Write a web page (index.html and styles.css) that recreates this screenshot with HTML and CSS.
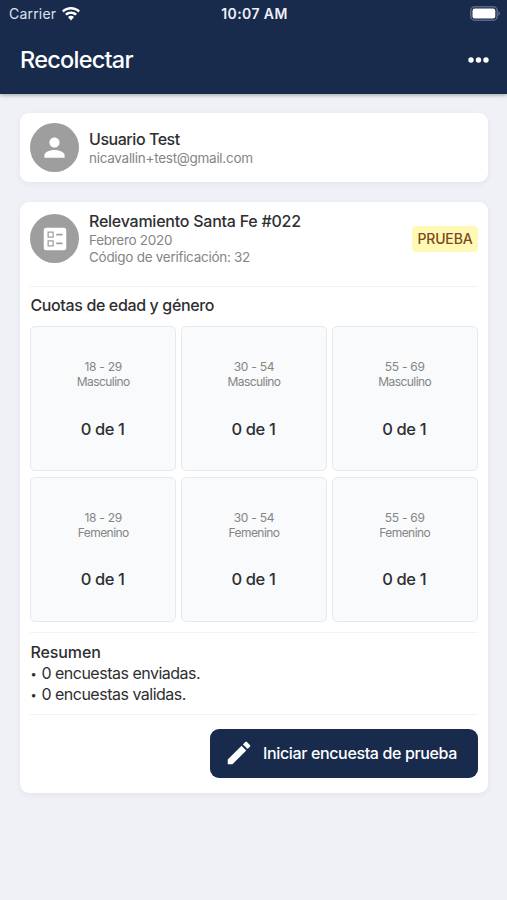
FILE: index.html
```
<!DOCTYPE html>
<html lang="es">
<head>
  <meta charset="UTF-8" />
  <meta name="viewport" content="width=device-width, initial-scale=1.0"/>
  <title>Recolectar</title>
  <link rel="stylesheet" href="styles.css">
</head>
<body>

  <!-- Encabezado -->
  <header>
    <div class="status-bar">
      <div class="carrier">
        <span>Carrier</span>
        <svg width="18" height="14" viewBox="0 0 18 14" fill="#fff">
          <path d="M9 0C5.600 0 2.500 1.300 0 3.500l1.700 1.900C3.700 3.600 6.200 2.600 9 2.600s5.300 1 7.300 2.800L18 3.500C15.500 1.300 12.400 0 9 0z"/>
          <path d="M9 4.400c-2.300 0-4.400.9-6 2.300l1.700 1.900C5.900 7.500 7.400 6.900 9 6.900s3.100.6 4.300 1.700L15 6.700c-1.600-1.400-3.700-2.300-6-2.300z"/>
          <path d="M9 8.700c-1.200 0-2.200.4-3 1.200l3 3.500 3-3.500c-.8-.8-1.800-1.200-3-1.200z"/>
        </svg>
      </div>
      <div class="clock">10:07 AM</div>
      <div class="battery">
        <svg width="30" height="15" viewBox="0 0 30 15">
          <rect x=".8" y=".8" width="26.400" height="13.400" rx="4" fill="none" stroke="#5a6685" stroke-width="1.600"/>
          <rect x="2.500" y="2.500" width="22.800" height="10" rx="2.200" fill="#fff"/>
          <path d="M28.500 5.200c1.900 1 1.900 3.600 0 4.600z" fill="#66718f"/>
        </svg>
      </div>
    </div>
    <div class="toolbar">
      <h1>Recolectar</h1>
      <svg width="21" height="6" viewBox="0 0 21 6" fill="#fff">
        <circle cx="3" cy="3" r="2.700"/>
        <circle cx="10.500" cy="3" r="2.700"/>
        <circle cx="18" cy="3" r="2.700"/>
      </svg>
    </div>
  </header>

  <main>
    <!-- Usuario -->
    <section class="card user">
      <div class="avatar">
        <svg width="27" height="27" viewBox="0 0 24 24" fill="#fff">
          <path d="M12 12c2.500 0 4.500-2 4.500-4.500S14.500 3 12 3 7.500 5 7.500 7.500 9.500 12 12 12zm0 2.200c-3 0-9 1.500-9 4.600V21h18v-2.200c0-3.100-6-4.600-9-4.600z"/>
        </svg>
      </div>
      <div class="info">
        <h2 class="name">Usuario Test</h2>
        <p class="email">nicavallin+test@gmail.com</p>
      </div>
    </section>

    <!-- Encuesta -->
    <section class="card survey">
      <div class="survey-head">
        <div class="avatar">
          <svg width="30" height="30" viewBox="0 0 24 24" fill="#fff">
            <path fill-rule="evenodd" d="M5 3h14a2 2 0 0 1 2 2v14a2 2 0 0 1-2 2H5a2 2 0 0 1-2-2V5a2 2 0 0 1 2-2zM6 6v5h5V6H6zm0 7v5h5v-5H6zm1-6h3v3H7V7zm0 7h3v3H7v-3zm6-6.300v1.500h5V7.700h-5zm0 7v1.500h5v-1.500h-5z"/>
          </svg>
        </div>
        <div class="info">
          <h2 class="title">Relevamiento Santa Fe #022</h2>
          <p class="date">Febrero 2020</p>
          <p class="code">Código de verificación: 32</p>
        </div>
        <span class="badge">PRUEBA</span>
      </div>

      <div class="quotas">
        <h3>Cuotas de edad y género</h3>
        <div class="grid">
          <div class="quota"><p class="age">18 - 29</p><p>Masculino</p><strong>0 de 1</strong></div>
          <div class="quota"><p class="age">30 - 54</p><p>Masculino</p><strong>0 de 1</strong></div>
          <div class="quota"><p class="age">55 - 69</p><p>Masculino</p><strong>0 de 1</strong></div>
          <div class="quota"><p class="age">18 - 29</p><p>Femenino</p><strong>0 de 1</strong></div>
          <div class="quota"><p class="age">30 - 54</p><p>Femenino</p><strong>0 de 1</strong></div>
          <div class="quota"><p class="age">55 - 69</p><p>Femenino</p><strong>0 de 1</strong></div>
        </div>
      </div>

      <div class="summary">
        <h3>Resumen</h3>
        <p><span class="dot">•</span> 0 encuestas enviadas.</p>
        <p><span class="dot">•</span> 0 encuestas validas.</p>
      </div>

      <div class="actions">
        <button>
          <svg width="30" height="30" viewBox="0 0 24 24" fill="#fff">
            <path d="M3 17.250V21h3.750L17.810 9.940l-3.750-3.750L3 17.250zM20.710 7.040c.39-.39.39-1.020 0-1.410l-2.340-2.340c-.39-.39-1.020-.39-1.410 0l-1.830 1.830 3.750 3.750 1.830-1.830z"/>
          </svg>
          <span>Iniciar encuesta de prueba</span>
        </button>
      </div>
    </section>
  </main>

</body>
</html>
```
FILE: styles.css
```
* {
  box-sizing: border-box;
}
body {
  margin: 0;
  min-height: 100vh;
  background: #f0f1f7;
  font-family: Inter, 'Liberation Sans', sans-serif;
  color: #2f2f31;
}
h1, h2, h3, p {
  margin: 0;
  font-weight: 500;
  white-space: nowrap;
}
svg {
  display: block;
  flex: none;
}
header {
  height: 94px;
  background: #182b4d;
  color: white;
  box-shadow: 0 1px 4px rgba(0, 0, 0, 0.35);
}
.status-bar {
  display: grid;
  grid-template-columns: 1fr auto 1fr;
  align-items: center;
  height: 27px;
  padding: 0 7px 0 9px;
}
.carrier {
  display: flex;
  align-items: center;
  gap: 6px;
  font-size: 14px;
  letter-spacing: 0.2px;
  color: #dfe3ec;
}
.clock {
  font-size: 14px;
  font-weight: 600;
  letter-spacing: 0.4px;
  color: #eef1f6;
}
.battery {
  display: flex;
  justify-content: flex-end;
}
.toolbar {
  display: flex;
  align-items: center;
  justify-content: space-between;
  height: 65px;
  padding: 0 18.5px 0 20px;
}
h1 {
  font-size: 23.5px;
  letter-spacing: -0.75px;
}
main {
  display: flex;
  flex-direction: column;
  gap: 20px;
  padding: 19px 19.5px 0 20.4px;
}
.card {
  background: white;
  border-radius: 9px;
  box-shadow: 0 2px 6px rgba(30, 40, 80, 0.06);
}
.user {
  display: flex;
  align-items: center;
  height: 69px;
  padding: 0 10px;
}
.avatar {
  display: flex;
  flex: none;
  align-items: center;
  justify-content: center;
  width: 49px;
  height: 49px;
  margin-right: 9.6px;
  border-radius: 50%;
  background: #9e9e9e;
}
.info {
  flex: 1;
}
.info p {
  font-size: 13.5px;
  font-weight: 400;
  line-height: 17px;
  letter-spacing: -0.28px;
  color: #858585;
}
h2 {
  font-size: 16px;
  line-height: 20px;
  letter-spacing: -0.24px;
}
.name {
  line-height: 21px;
  letter-spacing: -0.45px;
}
.title {
  margin: -1px 0 1px;
}
h3 {
  font-size: 16px;
  line-height: 21px;
  letter-spacing: -0.36px;
}
.survey {
  height: 590.5px;
  padding: 0 10px;
}
.survey-head {
  display: flex;
  align-items: center;
  height: 85px;
  padding-bottom: 11px;
  border-bottom: 1px solid #f3f3f5;
}
.badge {
  padding: 0 5px;
  border-radius: 4px;
  background: #fff9b5;
  color: #7b4a1c;
  font-size: 14px;
  font-weight: 500;
  line-height: 26px;
  letter-spacing: -0.15px;
}
.quotas {
  height: 345px;
  padding-top: 8px;
}
.grid {
  display: grid;
  grid-template-columns: repeat(3, 1fr);
  gap: 5.2px;
  margin-top: 10px;
}
.quota {
  height: 145.4px;
  padding-top: 32px;
  border: 1px solid #e6eaee;
  border-radius: 5px;
  background: #f8fafc;
  text-align: center;
}
.quota p {
  font-size: 12px;
  font-weight: 400;
  line-height: 15px;
  letter-spacing: -0.55px;
  color: #858585;
}
.quota .age {
  letter-spacing: -0.25px;
}
.quota strong {
  display: block;
  margin-top: 29.5px;
  font-size: 16.5px;
  font-weight: 500;
  line-height: 21px;
  letter-spacing: -0.4px;
  text-indent: -1px;
}
.summary {
  height: 82.5px;
  padding-top: 9px;
  border-top: 1px solid #f3f3f5;
  border-bottom: 1px solid #f3f3f5;
}
.summary h3 {
  letter-spacing: -0.1px;
}
.summary p {
  font-size: 16px;
  font-weight: 400;
  line-height: 20.5px;
  letter-spacing: -0.5px;
}
.dot {
  display: inline-block;
  width: 7px;
  font-size: 11px;
  line-height: 1;
  vertical-align: 1px;
}
.actions {
  display: flex;
  justify-content: flex-end;
  padding-top: 14px;
}
button {
  display: flex;
  align-items: center;
  gap: 9px;
  width: 267.5px;
  height: 49px;
  padding: 0 14px;
  border: none;
  border-radius: 9px;
  background: #182b4d;
  color: white;
  font-family: inherit;
  font-size: 16px;
  font-weight: 500;
  letter-spacing: -0.36px;
  white-space: nowrap;
}
```
